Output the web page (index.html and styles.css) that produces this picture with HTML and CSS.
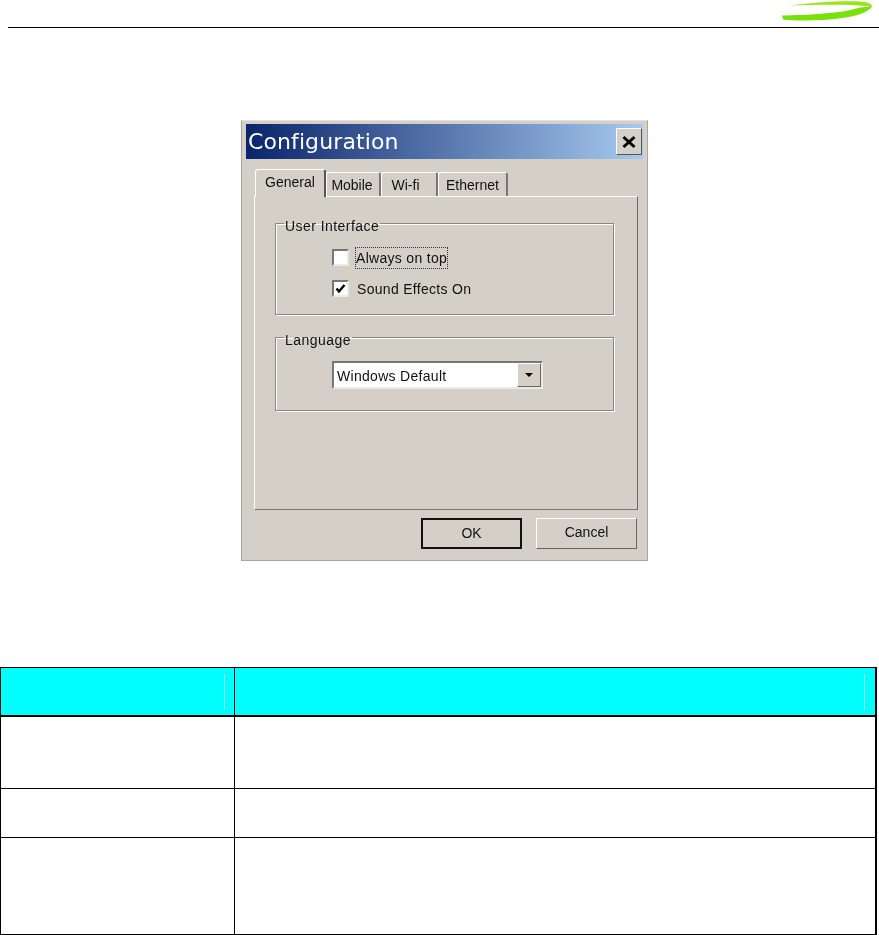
FILE: index.html
```html
<!DOCTYPE html>
<html lang="en">
<head>
	<meta charset="UTF-8">
	<title>Configuration</title>
	<link rel="stylesheet" href="styles.css">
</head>
<body>
	<div class="page-head">
		<svg class="logo" viewBox="0 0 96 24" width="96" height="24">
			<path d="M9 4.5 C30 2 60 -.5 80 .5 C89 1 93 3.5 92 6 C80 3.5 50 3 9 4.5 Z" fill="#9ae41c"/>
			<path d="M2 14.5 C28 14 62 12.5 80 6.5 L92 5.5 C89 11 77 15 62 17 C42 20 15 20 3 18.5 Z" fill="#78e00a"/>
		</svg>
	</div>

	<div class="dialog">
		<div class="titlebar">
			<span class="title">Configuration</span>
			<span class="close">
				<svg viewBox="0 0 14 14" width="14" height="14"><path d="M1.5 2 L12.5 12 M12.5 2 L1.5 12" stroke="#000" stroke-width="3"/></svg>
			</span>
		</div>

		<div class="tabs">
			<div class="tab act">General</div>
			<div class="tab">Mobile</div>
			<div class="tab">Wi-fi</div>
			<div class="tab">Ethernet</div>
		</div>
		<div class="panel">
			<fieldset class="group group-ui">
				<legend>User Interface</legend>
				<div class="check-row">
					<span class="check"></span>
					<span class="focus">Always on top</span>
				</div>
				<div class="check-row">
					<span class="check">
						<svg viewBox="0 0 11 11" width="11" height="11"><path d="M1.5 5.5 L4 8.5 L9.5 2" fill="none" stroke="#000" stroke-width="2.4"/></svg>
					</span>
					<span class="plain">Sound Effects On</span>
				</div>
			</fieldset>
			<fieldset class="group group-lang">
				<legend>Language</legend>
				<div class="combo">
					<span class="combo-text">Windows Default</span>
					<span class="combo-btn"><i class="arrow"></i></span>
				</div>
			</fieldset>
		</div>

		<div class="buttons">
			<div class="btn btn-default">OK</div>
			<div class="btn">Cancel</div>
		</div>
	</div>

	<table class="info">
		<tr class="head">
			<th class="c1"><div class="mark mark-first"></div></th>
			<th><div class="mark"></div></th>
		</tr>
		<tr class="r1"><td></td><td></td></tr>
		<tr class="r2"><td></td><td></td></tr>
		<tr class="r3"><td></td><td></td></tr>
	</table>
</body>
</html>
```

FILE: styles.css
```css
html, body {
	margin: 0;
	padding: 0;
	background: #fff;
}
body {
	width: 879px;
	height: 935px;
	overflow: hidden;
	font-family: "Liberation Sans", Arial, sans-serif;
	color: #111;
}
.page-head {
	height: 27px;
	margin-left: 8px;
	border-bottom: 1px solid #000;
	display: flex;
	justify-content: flex-end;
	padding-right: 3px;
}
.logo {
	margin-top: 1px;
}

.dialog {
	box-sizing: border-box;
	width: 407px;
	height: 441px;
	margin: 92px 0 0 241px;
	padding: 3px 4px 0;
	background: #d4d0c8;
	border: 1px solid #a9a7a1;
	border-top-color: #e4e2dc;
	filter: blur(.35px);
}
.titlebar {
	height: 35px;
	background: linear-gradient(to right, #0a246a, #a6caf0);
	display: flex;
	align-items: center;
	justify-content: space-between;
	padding-right: 1px;
}
.title {
	margin-left: 2px;
	font-family: "DejaVu Sans", sans-serif;
	font-size: 22px;
	letter-spacing: .1px;
	color: #fff;
}
.close {
	box-sizing: border-box;
	width: 26px;
	height: 27px;
	background: #d4d0c8;
	border: 1px solid;
	border-color: #fff #555 #555 #fff;
	display: flex;
	align-items: center;
	justify-content: center;
}

.tabs {
	display: flex;
	align-items: flex-end;
	height: 27px;
	margin: 10px 0 0 9px;
	font-size: 14px;
}
.tab {
	box-sizing: border-box;
	height: 24px;
	padding-top: 4px;
	text-align: center;
	border-top: 1px solid #fff;
	border-right: 2px solid #777;
	border-left: 1px solid #fff;
	border-radius: 3px 3px 0 0;
}
.tab:nth-child(1) {
	width: 71px;
}
.tab:nth-child(2) {
	width: 55px;
	padding-right: 2px;
}
.tab:nth-child(3) {
	width: 57px;
	padding-right: 7px;
}
.tab:nth-child(4) {
	width: 70px;
}
.tab.act {
	height: 28px;
	padding-top: 4px;
	margin-bottom: -1px;
	position: relative;
	background: #d4d0c8;
	border-right-color: #555;
}
.panel {
	box-sizing: border-box;
	width: 384px;
	height: 314px;
	margin-left: 8px;
	padding: 15px 24px 0 20px;
	border: 1px solid;
	border-color: #fff #666 #777 #fff;
	font-size: 14px;
}
.group {
	box-sizing: border-box;
	margin: 0 0 11px;
	padding: 0;
	width: 339px;
	border: 1px solid #8a8883;
	box-shadow: 1px 1px 0 #fff, inset 1px 1px 0 #fff;
}
.group legend {
	margin-left: 8px;
	padding: 6px 1px 0;
	line-height: 16px;
	font-size: 14px;
	letter-spacing: .45px;
}
.group-ui {
	height: 103px;
}
.group-lang {
	height: 85px;
}
.check-row {
	display: flex;
	align-items: center;
	height: 21px;
	margin: 0 0 10px 56px;
}
.check-row:first-of-type {
	margin-top: 13px;
}
.check {
	box-sizing: border-box;
	width: 17px;
	height: 17px;
	background: #fff;
	border: 2px solid;
	border-color: #777 #ece9e3 #ece9e3 #777;
	display: flex;
	align-items: center;
	justify-content: center;
}
.focus, .plain {
	margin-left: 7px;
	letter-spacing: .3px;
}
.plain {
	margin-left: 8px;
}
.focus {
	padding: 2px 0;
	outline: 1px dotted #333;
}
.combo {
	box-sizing: border-box;
	width: 211px;
	height: 28px;
	margin: 13px 0 0 56px;
	background: #fff;
	border: 2px solid;
	border-color: #777 #ece9e3 #ece9e3 #777;
	display: flex;
	align-items: center;
	justify-content: space-between;
}
.combo-text {
	margin-left: 3px;
	padding-top: 2px;
	letter-spacing: .3px;
}
.combo-btn {
	box-sizing: border-box;
	width: 24px;
	height: 24px;
	background: #d4d0c8;
	border: 1px solid;
	border-color: #fff #666 #666 #fff;
	display: flex;
	align-items: center;
	justify-content: center;
}
.arrow {
	width: 0;
	height: 0;
	border: 4px solid transparent;
	border-top: 4px solid #000;
	border-bottom: 0;
}

.buttons {
	display: flex;
	justify-content: flex-end;
	gap: 14px;
	margin: 8px 6px 0 0;
	font-size: 14px;
}
.btn {
	box-sizing: border-box;
	width: 101px;
	height: 31px;
	line-height: 27px;
	text-align: center;
	border: 1px solid;
	border-color: #fff #666 #666 #fff;
}
.btn-default {
	border: 2px solid #111;
}

.info {
	width: 877px;
	margin-top: 106px;
	table-layout: fixed;
	border-collapse: separate;
	border-spacing: 0;
	border-top: 1px solid #000;
	border-left: 1px solid #000;
	border-right: 2px solid #000;
}
.info th, .info td {
	padding: 0;
	border-right: 1px solid #000;
	border-bottom: 1px solid #000;
}
.info th:last-child, .info td:last-child {
	border-right: 0;
}
.info .c1 {
	width: 233px;
}
.head th {
	height: 47px;
	background: #0ff;
	border-bottom-width: 2px;
}
.mark {
	width: 1px;
	height: 36px;
	margin: 0 10px 0 auto;
	background: #a8f0ee;
}
.mark-first {
	margin-right: 9px;
}
.r1 td {
	height: 71px;
}
.r2 td {
	height: 48px;
}
.r3 td {
	height: 96px;
}
```
